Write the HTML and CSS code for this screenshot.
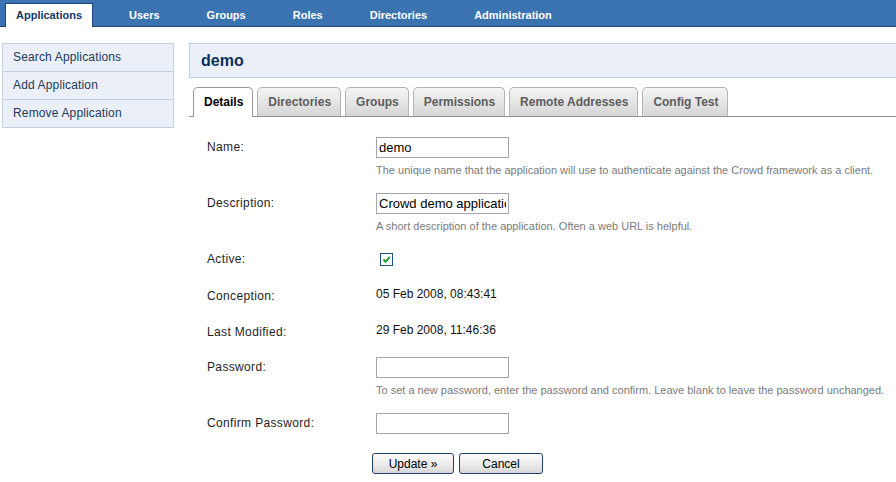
FILE: index.html
```html
<!DOCTYPE html>
<html>
<head>
<meta charset="utf-8">
<title>Crowd - demo</title>
<link rel="stylesheet" href="styles.css">
</head>
<body>
<nav class="topnav">
  <a class="nav-item active">Applications</a>
  <a class="nav-item">Users</a>
  <a class="nav-item">Groups</a>
  <a class="nav-item">Roles</a>
  <a class="nav-item">Directories</a>
  <a class="nav-item">Administration</a>
</nav>
<div class="page">
  <aside class="sidebar">
    <a class="side-item">Search Applications</a>
    <a class="side-item">Add Application</a>
    <a class="side-item">Remove Application</a>
  </aside>
  <main class="main">
    <h1 class="title">demo</h1>
    <div class="tabs">
      <span class="tab active">Details</span>
      <span class="tab">Directories</span>
      <span class="tab">Groups</span>
      <span class="tab">Permissions</span>
      <span class="tab">Remote Addresses</span>
      <span class="tab">Config Test</span>
    </div>
    <form class="form">
      <div class="row">
        <label class="label">Name:</label>
        <div class="field">
          <input class="input" type="text" value="demo">
          <p class="help">The unique name that the application will use to authenticate against the Crowd framework as a client.</p>
        </div>
      </div>
      <div class="row">
        <label class="label">Description:</label>
        <div class="field">
          <input class="input" type="text" value="Crowd demo application">
          <p class="help">A short description of the application. Often a web URL is helpful.</p>
        </div>
      </div>
      <div class="row">
        <label class="label">Active:</label>
        <div class="field">
          <span class="checkbox"><svg width="11" height="11" viewBox="0 0 11 11"><path d="M2.5 5.5 L4.5 7.8 L8.8 2.8" fill="none" stroke="#1fa02a" stroke-width="2"/></svg></span>
        </div>
      </div>
      <div class="row row-text gap-14">
        <label class="label">Conception:</label>
        <div class="field value">05 Feb 2008, 08:43:41</div>
      </div>
      <div class="row row-text gap-15">
        <label class="label">Last Modified:</label>
        <div class="field value">29 Feb 2008, 11:46:36</div>
      </div>
      <div class="row">
        <label class="label">Password:</label>
        <div class="field">
          <input class="input" type="password" value="">
          <p class="help">To set a new password, enter the password and confirm. Leave blank to leave the password unchanged.</p>
        </div>
      </div>
      <div class="row">
        <label class="label">Confirm Password:</label>
        <div class="field">
          <input class="input" type="password" value="">
        </div>
      </div>
      <div class="buttons">
        <button type="button" class="btn btn-update">Update &raquo;</button>
        <button type="button" class="btn btn-cancel">Cancel</button>
      </div>
    </form>
  </main>
</div>
</body>
</html>
```
FILE: styles.css
```css
* { box-sizing: border-box; }
html, body { margin: 0; padding: 0; }
body {
  font-family: "Liberation Sans", Arial, sans-serif;
  font-size: 12px;
  color: #222;
  background: #fff;
  overflow: hidden;
}

/* top navigation */
.topnav {
  display: flex;
  align-items: flex-end;
  gap: 25px;
  height: 27px;
  padding-left: 5px;
  background: #3b73b1;
  border-bottom: 1px solid #1d467a;
}
.nav-item {
  display: block;
  padding: 0 10px;
  height: 24px;
  line-height: 22px;
  margin-bottom: -1px;
  border: 1px solid transparent;
  border-bottom: none;
  font-size: 11px;
  font-weight: bold;
  color: #fff;
}
.nav-item.active {
  background: #fff;
  color: #143866;
  border-color: #1d467a;
}

/* page layout */
.page {
  display: flex;
  align-items: flex-start;
  gap: 15px;
  padding: 16px 0 0 2px;
}
.sidebar {
  width: 172px;
  flex: none;
  border: 1px solid #c3d3e7;
  background: #ebf0f8;
}
.side-item {
  display: block;
  height: 28px;
  line-height: 27px;
  padding-left: 10px;
  border-top: 1px solid #c3d3e7;
  color: #23395b;
  font-size: 12px;
  letter-spacing: 0.15px;
}
.side-item:first-child { border-top: none; height: 27px; line-height: 27px; }

.main {
  flex: 1;
  margin-right: -4px;
}
.title {
  margin: 0;
  height: 35px;
  line-height: 33px;
  padding-left: 11px;
  border: 1px solid #c0d1e6;
  background: #ebf0f8;
  color: #0d2f5e;
  font-size: 16px;
  font-weight: bold;
}

/* tabs */
.tabs {
  display: flex;
  align-items: flex-end;
  gap: 4px;
  margin-top: 9px;
  padding-left: 4px;
  height: 30px;
  border-bottom: 1px solid #939393;
}
.tab {
  display: block;
  height: 29px;
  line-height: 28px;
  padding: 0 9px 0 10px;
  border: 1px solid #b4b4b4;
  border-bottom: none;
  border-radius: 5px 5px 0 0;
  background: linear-gradient(#f5f5f5, #d5d5d5);
  color: #5d5d5d;
  font-weight: bold;
  font-size: 12px;
}
.tab.active {
  height: 30px;
  margin-bottom: -1px;
  background: #fff;
  border-color: #9a9a9a;
  color: #000;
}

/* form */
.form {
  margin: 0;
  padding: 20px 0 0 18px;
}
.row {
  display: flex;
  margin-top: 16px;
}
.row:first-child { margin-top: 0; }
.row.gap-14 { margin-top: 14px; }
.row.gap-15 { margin-top: 15px; }
.row-text { height: 21px; }
.label {
  width: 169px;
  flex: none;
  line-height: 21px;
  font-size: 12px;
  letter-spacing: 0.35px;
  color: #1e1e1e;
}
.row-text .label { padding-top: 2px; }
.field { flex: 1; min-width: 0; }
.value {
  line-height: 21px;
  font-size: 12px;
  color: #111;
}
.input {
  display: block;
  width: 133px;
  height: 21px;
  margin: 0;
  padding: 0 2px;
  border: 1px solid #a3a7ab;
  font-family: "Liberation Sans", Arial, sans-serif;
  font-size: 13px;
  color: #000;
  background: #fff;
}
.help {
  margin: 5px 0 0;
  line-height: 14px;
  font-size: 11px;
  color: #7b7b7b;
  white-space: nowrap;
}
.checkbox {
  display: flex;
  align-items: center;
  justify-content: center;
  width: 13px;
  height: 13px;
  margin: 4px 0 0 4px;
  border: 1px solid #1c5180;
  background: #fff;
}

.buttons {
  display: flex;
  gap: 5px;
  margin-top: 19px;
  padding-left: 165px;
}
.btn {
  height: 21px;
  margin: 0;
  padding: 0;
  border: 1px solid #233f69;
  border-radius: 3px;
  background: linear-gradient(#fdfdfd, #e9e9e9 60%, #d6d6d6);
  font-family: "Liberation Sans", Arial, sans-serif;
  font-size: 12px;
  color: #000;
}
.btn-update { width: 82px; }
.btn-cancel { width: 84px; }
```
